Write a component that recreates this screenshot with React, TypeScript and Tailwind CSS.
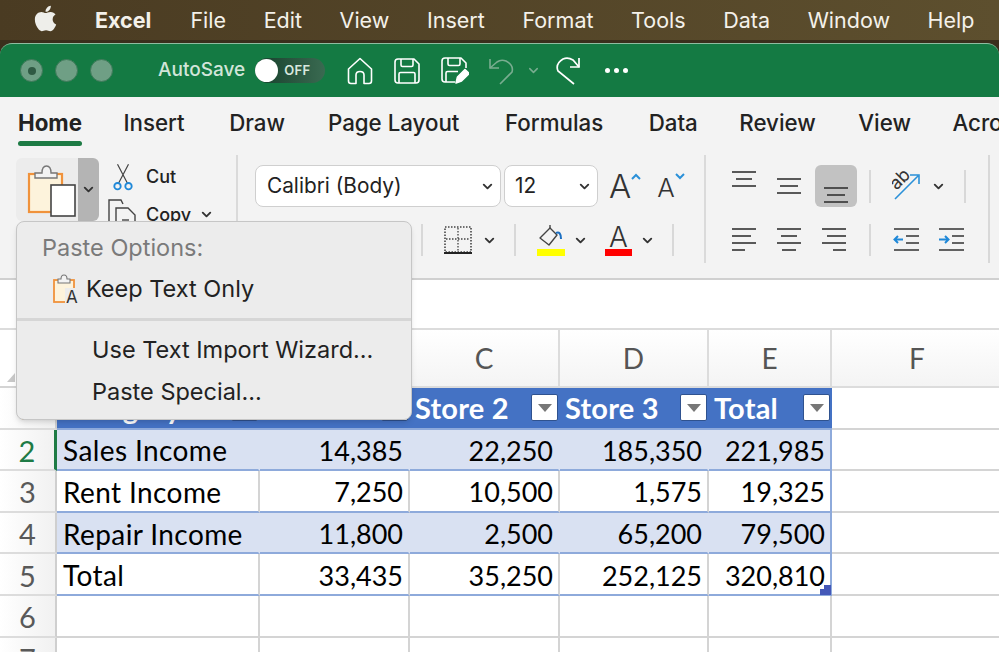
import { ChevronDown } from "lucide-react";
import { FaApple } from "react-icons/fa";

const menus = ["File", "Edit", "View", "Insert", "Format", "Tools", "Data", "Window", "Help"];
const tabs = [
  { name: "Insert", cls: "ml-[41.5px]" },
  { name: "Draw", cls: "ml-[44.5px]" },
  { name: "Page Layout", cls: "ml-[43px]" },
  { name: "Formulas", cls: "ml-[45.5px]" },
  { name: "Data", cls: "ml-[45.5px]" },
  { name: "Review", cls: "ml-[41.5px]" },
  { name: "View", cls: "ml-[42.5px]" },
  { name: "Acrobat", cls: "ml-[41.5px]" },
];

function Chev({ className = "" }: { className?: string }) {
  return <ChevronDown size={15} strokeWidth={3} className={"text-[#333] " + className} />;
}

function Sep({ className = "" }: { className?: string }) {
  return <div className={"w-[2px] bg-[#d8d8d8] " + className} />;
}

// horizontal text-alignment glyph: each line is [x1, x2, y]
function Lines({ lines }: { lines: number[][] }) {
  return (
    <svg width="26" height="26" viewBox="0 0 26 26" fill="none" stroke="#333" strokeWidth="1.6">
      {lines.map((l, i) => (
        <line key={i} x1={l[0]} x2={l[1]} y1={l[2]} y2={l[2]} />
      ))}
    </svg>
  );
}

function TitleIcons() {
  return (
    <div className="flex items-center ml-[22px]">
      <svg width="26" height="28" viewBox="0 0 26 28" fill="none" stroke="white" strokeWidth="1.6" strokeLinejoin="round">
        <path d="M1.5 12 L13 1.5 L24.5 12 V24 Q24.5 26.5 22 26.5 H17 V18 Q17 14.5 13 14.5 Q9 14.5 9 18 V26.5 H4 Q1.5 26.5 1.5 24 Z" />
      </svg>
      <svg className="ml-[21px]" width="26" height="26" viewBox="0 0 26 26" fill="none" stroke="white" strokeWidth="1.6" strokeLinejoin="round">
        <path d="M1 4 Q1 1 4 1 H20 L25 6 V22 Q25 25 22 25 H4 Q1 25 1 22 Z" />
        <path d="M7 1 V7 Q7 8.5 8.5 8.5 H17.5 Q19 8.5 19 7 V1" />
        <path d="M5 25 V16 Q5 14.5 6.5 14.5 H19.5 Q21 14.5 21 16 V25" />
      </svg>
      <svg className="ml-[21px]" width="28" height="27" viewBox="0 0 28 27" fill="none" stroke="white" strokeWidth="1.6" strokeLinejoin="round">
        <path d="M14 25 H4 Q1 25 1 22 V4 Q1 1 4 1 H20 L25 6 V11" />
        <path d="M7 1 V7 Q7 8.5 8.5 8.5 H17.5 Q19 8.5 19 7 V1" />
        <path d="M5 25 V16 Q5 14.5 6.5 14.5 H17" />
        <path d="M15 26 L16.5 20 L24 12.5 L28 16.5 L20.5 24 Z" fill="white" />
      </svg>
      <svg className="ml-[20px]" width="26" height="28" viewBox="0 0 26 28" fill="none" stroke="#79ad90" strokeWidth="1.6">
        <path d="M1 2 V11 H10" />
        <path d="M1 11 L8 5 Q12 2 17 4 Q25 8 23 15 L11 27" />
      </svg>
      <ChevronDown size={15} strokeWidth={2.4} className="ml-[11px] text-[#79ad90]" />
      <svg className="ml-[15px]" width="25" height="30" viewBox="0 0 25 30" fill="none" stroke="white" strokeWidth="1.7">
        <path d="M23 2 V11 H14" />
        <path d="M23 11 L17 4 Q12 1 7 3 Q-1 8 2 15 L18 28" />
      </svg>
      <div className="ml-[24px] flex gap-[4.5px]">
        <div className="w-[4.5px] h-[4.5px] rounded-full bg-white" />
        <div className="w-[4.5px] h-[4.5px] rounded-full bg-white" />
        <div className="w-[4.5px] h-[4.5px] rounded-full bg-white" />
      </div>
    </div>
  );
}

function Ribbon() {
  return (
    <div className="h-[123px] bg-[#f3f3f3] flex text-[#222]">
      {/* clipboard */}
      <div className="w-[238px] h-[66px] pl-[16px] pt-[3px] flex shrink-0 border-r-2 border-[#dadada]">
        <div className="w-[83px] h-[63px] flex rounded-md overflow-hidden">
          <div className="w-[62px] bg-[#ececec]">
            <svg width="62" height="63" viewBox="0 0 62 63" fill="none">
              <rect x="13" y="16" width="33" height="38" fill="#fdf3dc" stroke="#f0923b" strokeWidth="2.2" />
              <path d="M19 20 V15 H26 Q26 8 30.5 8 Q35 8 35 15 H41 V20 Z" fill="#f3f3f3" stroke="#777" strokeWidth="1.4" />
              <rect x="35" y="27" width="24" height="31" fill="white" stroke="#444" strokeWidth="1.6" />
            </svg>
          </div>
          <div className="flex-1 bg-[#b4b4b4] flex items-center justify-center">
            <Chev />
          </div>
        </div>
        <div className="ml-[13px] flex flex-col">
          <div className="flex items-center h-[37px] shrink-0">
            <svg width="22" height="28" viewBox="0 0 24 30" fill="none">
              <path d="M6 1 L17 22 M18 1 L7 22" stroke="#444" strokeWidth="1.3" />
              <circle cx="6" cy="25" r="3.5" stroke="#1f88d8" strokeWidth="2" />
              <circle cx="18" cy="25" r="3.5" stroke="#1f88d8" strokeWidth="2" />
            </svg>
            <span className="ml-[12px] text-[18px] font-medium">Cut</span>
          </div>
          <div className="flex items-center h-[38px] shrink-0 -ml-[4px]">
            <svg width="28" height="30" viewBox="0 0 28 30" fill="none" stroke="#444" strokeWidth="1.4">
              <path d="M1 24 V1 H13 L15 5" />
              <path d="M8 30 V9 H20 L27 16 V30 Z" fill="#f3f3f3" />
              <path d="M14 21 H21" />
            </svg>
            <span className="ml-[10px] text-[18px] font-medium">Copy</span>
            <Chev className="ml-[8px]" />
          </div>
        </div>
      </div>

      {/* font */}
      <div className="w-[468px] h-[108px] shrink-0 border-r-2 border-[#dadada] pl-[17px] pt-[10px] flex flex-col">
        <div className="flex items-center h-[42px]">
          <div className="w-[246px] h-[42px] bg-white border border-[#cfcfcf] rounded-lg flex items-center justify-between pl-[11px] pr-[5px] text-[20.8px]">
            <span>Calibri (Body)</span>
            <Chev />
          </div>
          <div className="ml-[3px] w-[94px] h-[42px] bg-white border border-[#cfcfcf] rounded-lg flex items-center justify-between pl-[10px] pr-[5px] text-[20.8px]">
            <span>12</span>
            <Chev />
          </div>
          <div className="ml-[11px] flex items-start">
            <span className="text-[33px] font-light leading-none text-[#333]">A</span>
            <svg className="mt-[3px]" width="10" height="7" viewBox="0 0 10 7" fill="none" stroke="#2a90d8" strokeWidth="2"><path d="M1 6 L5 2 L9 6" /></svg>
          </div>
          <div className="ml-[16px] flex items-start">
            <span className="text-[26px] font-light leading-none mt-[3px] text-[#333]">A</span>
            <svg className="mt-[1px]" width="10" height="7" viewBox="0 0 10 7" fill="none" stroke="#2a90d8" strokeWidth="2"><path d="M1 1 L5 5 L9 1" /></svg>
          </div>
        </div>
        <div className="flex items-center h-[36px] mt-[15px]">
          <div className="w-[150px] flex items-center text-[20px] gap-[16px] pl-[2px]">
            <b>B</b>
            <i>I</i>
            <u>U</u>
          </div>
          <Sep className="ml-[16px] h-[32px]" />
          <svg className="ml-[21px]" width="28" height="30" viewBox="0 0 28 30" fill="none">
            <rect x="1" y="2" width="26" height="25" stroke="#444" strokeWidth="1.6" strokeDasharray="1.5 1.5" />
            <path d="M14 3 V26 M2 14 H26" stroke="#444" strokeWidth="1.3" strokeDasharray="1.5 1.5" />
            <path d="M0 28 H28" stroke="#222" strokeWidth="2" />
          </svg>
          <Chev className="ml-[10px]" />
          <Sep className="ml-[17px] h-[32px]" />
          <div className="ml-[21px] flex flex-col items-center w-[28px]">
            <svg width="24" height="24" viewBox="0 0 24 24" fill="none">
              <path d="M1 13 L11 3 L18 10 L10 20 Z" stroke="#444" strokeWidth="1.4" strokeLinejoin="round" />
              <path d="M11 3 V0" stroke="#444" strokeWidth="1.4" />
              <path d="M17 8 Q22 6 22 14" stroke="#1b6fc2" strokeWidth="2" />
            </svg>
            <div className="w-[28px] h-[7px] bg-[#ffff00]" />
          </div>
          <Chev className="ml-[8px]" />
          <div className="ml-[17px] flex flex-col items-center w-[27px]">
            <span className="text-[28px] font-light leading-[24px] text-[#333]">A</span>
            <div className="w-[27px] h-[7px] bg-[#ff0000]" />
          </div>
          <Chev className="ml-[8px]" />
          <Sep className="ml-[17px] h-[32px]" />
        </div>
      </div>

      {/* alignment */}
      <div className="flex-1 pl-[25px] pt-[10px] flex">
        <div className="flex flex-col">
          <div className="flex items-center h-[42px]">
            <div className="w-[26px] flex justify-center -mt-[14px]">
              <Lines lines={[[1, 25, 6], [5, 21, 13], [1, 25, 20]]} />
            </div>
            <div className="ml-[19px] w-[26px]">
              <Lines lines={[[1, 25, 6], [4, 22, 13], [1, 25, 20]]} />
            </div>
            <div className="ml-[13px] w-[42px] h-[42px] rounded-md bg-[#c2c2c2] flex items-end justify-center pb-[1px]">
              <Lines lines={[[1, 25, 8], [4, 22, 15], [1, 25, 22]]} />
            </div>
          </div>
          <div className="flex items-center h-[36px] mt-[15px]">
            <Lines lines={[[1, 25, 2], [1, 20, 9], [1, 25, 16], [1, 14, 23]]} />
            <div className="ml-[19px]"><Lines lines={[[1, 25, 2], [5, 21, 9], [1, 25, 16], [6, 20, 23]]} /></div>
            <div className="ml-[19px]"><Lines lines={[[1, 25, 2], [6, 25, 9], [1, 25, 16], [12, 25, 23]]} /></div>
          </div>
        </div>
        <div className="flex flex-col ml-[12px]">
          <div className="flex items-center h-[42px]">
            <Sep className="h-[33px]" />
            <svg className="ml-[21px]" width="29" height="30" viewBox="0 0 29 30" fill="none">
              <path d="M3 28 L26 5 M18 4 H27 V13" stroke="#2a90d8" strokeWidth="1.6" />
              <text x="0" y="15" fontSize="18" fill="#333" transform="rotate(-45 8 12)">ab</text>
            </svg>
            <Chev className="ml-[10px]" />
            <Sep className="ml-[18px] h-[33px]" />
          </div>
          <div className="flex items-center h-[36px] mt-[15px]">
            <Sep className="h-[32px]" />
            <svg className="ml-[22px]" width="27" height="26" viewBox="0 0 27 26" fill="none" strokeWidth="1.6">
              <path d="M1 2 H26 M13 9 H26 M13 16 H26 M1 23 H26" stroke="#333" />
              <path d="M10 12.5 H2 M5 9 L1.5 12.5 L5 16" stroke="#1f88d8" strokeWidth="2" />
            </svg>
            <svg className="ml-[18px]" width="27" height="26" viewBox="0 0 27 26" fill="none" strokeWidth="1.6">
              <path d="M1 2 H26 M14 9 H26 M14 16 H26 M1 23 H26" stroke="#333" />
              <path d="M1 12.5 H10 M7 9 L10.5 12.5 L7 16" stroke="#1f88d8" strokeWidth="2" />
            </svg>
          </div>
        </div>
        <Sep className="ml-[22px] h-[108px] -mt-[10px]" />
      </div>
    </div>
  );
}

const colCls = "grid grid-cols-[57px_203px_150px_150px_149px_123px_172px]";
const gray = "border-[#d4d4d4]";

function FilterBtn() {
  return (
    <div className="w-[27px] h-[27px] shrink-0 bg-white border border-[#2f528f] rounded-[2px] flex items-center justify-center">
      <div className="w-0 h-0 border-l-[7px] border-r-[7px] border-t-[8px] border-l-transparent border-r-transparent border-t-[#777]" />
    </div>
  );
}

function RowHead({ n, active }: { n: number; active?: boolean }) {
  return (
    <div
      className={
        "flex items-center justify-center pt-[2px] bg-gradient-to-r from-white to-[#f1f1f1] border-b-2 border-[#dcdcdc] text-[29px] " +
        (active ? "text-[#1e7b45] border-r-[3px] border-r-[#1e7b45]" : "text-[#595959] border-r-2 border-r-[#cfcfcf]")
      }
    >
      {n}
    </div>
  );
}

function DataRow({ n, cells, band, active }: { n: number; cells: string[]; band?: boolean; active?: boolean }) {
  return (
    <div className={colCls + " h-[41.6px]"}>
      <RowHead n={n} active={active} />
      {cells.map((c, i) => (
        <div
          key={i}
          className={
            "flex items-center pt-[2px] border-b-2 border-b-[#8eaadb] border-r-2 text-black " +
            (i === 0 ? "justify-start pl-[6px] text-[28px] tracking-[0.4px] " : "justify-end pr-[5px] text-[27px] ") +
            (band ? "bg-[#d9e1f2] " : "bg-white ") +
            (i === 4 ? "border-r-[#8eaadb]" : band ? "border-r-transparent" : "border-r-[#d4d4d4]")
          }
        >
          {c}
        </div>
      ))}
      <div className={"bg-white border-b-2 " + gray} />
    </div>
  );
}

function EmptyRow({ n }: { n: number }) {
  return (
    <div className={colCls + " h-[41.6px]"}>
      <RowHead n={n} />
      {[0, 1, 2, 3, 4].map((i) => (
        <div key={i} className={"bg-white border-b-2 border-r-2 " + gray} />
      ))}
      <div className={"bg-white border-b-2 " + gray} />
    </div>
  );
}

function Sheet() {
  return (
    <div className="[font-family:Lato,sans-serif] leading-none">
      <div className={colCls + " h-[60px] border-t-2 border-[#dcdcdc]"}>
        <div className="bg-white border-r-2 border-b-2 border-[#d4d4d4] flex items-end justify-end pr-[40px] pb-[4px]">
          <div className="w-0 h-0 border-l-[8px] border-t-[9px] border-l-transparent border-t-transparent border-r-[8px] border-r-[#c8c8c8]" />
        </div>
        {["A", "B", "C", "D", "E", "F"].map((c) => (
          <div key={c} className="flex items-center justify-center bg-gradient-to-b from-white to-[#f4f4f4] border-r-2 border-b-2 border-[#dcdcdc] text-[#555] text-[28px]">
            {c}
          </div>
        ))}
      </div>
      <div className={colCls + " h-[41.6px]"}>
        <RowHead n={1} />
        {["Category", "Store 1", "Store 2", "Store 3", "Total"].map((h) => (
          <div key={h} className="flex items-center justify-between bg-[#4472c4] border-b-2 border-b-[#8eaadb] pl-[5px] pr-[2px] text-white font-bold text-[29px] tracking-[0.2px]">
            <span>{h}</span>
            <FilterBtn />
          </div>
        ))}
        <div className={"bg-white border-b-2 " + gray} />
      </div>
      <DataRow n={2} band active cells={["Sales Income", "14,385", "22,250", "185,350", "221,985"]} />
      <DataRow n={3} cells={["Rent Income", "7,250", "10,500", "1,575", "19,325"]} />
      <DataRow n={4} band cells={["Repair Income", "11,800", "2,500", "65,200", "79,500"]} />
      <DataRow n={5} cells={["Total", "33,435", "35,250", "252,125", "320,810"]} />
      <EmptyRow n={6} />
      <EmptyRow n={7} />
    </div>
  );
}

export default function App() {
  return (
    <div className="relative w-[999px] h-[652px] overflow-hidden bg-white [font-family:Inter,sans-serif]">
      {/* menu bar */}
      <div className="h-[40px] bg-gradient-to-r from-[#4a3b22] to-[#5d4f2e] flex items-center pl-[31px] text-[21.5px] text-[#f4f1ea]">
        <FaApple size={29} className="text-[#eeeeea] -mt-[3px]" />
        <span className="ml-[35px] font-bold text-[21.5px]">Excel</span>
        <div className="ml-[39px] flex gap-[37.6px]">
          {menus.map((m) => (
            <span key={m}>{m}</span>
          ))}
        </div>
      </div>
      {/* title bar */}
      <div className="bg-[#2f2616]">
        <div className="h-[57px] pt-[3px] bg-[#3a2f1c]">
          <div className="h-[54px] bg-[#147a43] border-t border-[#8fbda1] rounded-t-[12px] flex items-center pl-[20px]">
            <div className="w-[23px] h-[23px] rounded-full bg-[#6f9f85] border border-[#3f7a5a] flex items-center justify-center">
              <div className="w-[8px] h-[8px] rounded-full bg-[#2f5a43]" />
            </div>
            <div className="ml-[12px] w-[23px] h-[23px] rounded-full bg-[#6f9f85] border border-[#3f7a5a]" />
            <div className="ml-[12px] w-[23px] h-[23px] rounded-full bg-[#6f9f85] border border-[#3f7a5a]" />
            <span className="ml-[45px] text-[19px] font-medium text-[#d2e5d9]">AutoSave</span>
            <div className="ml-[10px] w-[70px] h-[25px] rounded-full bg-gradient-to-r from-[#153f2b] to-[#3a6a51] flex items-center">
              <div className="w-[23px] h-[23px] rounded-full bg-white" />
              <span className="ml-[6px] text-[13px] font-semibold tracking-wide text-[#d8e8de]">OFF</span>
            </div>
            <TitleIcons />
          </div>
        </div>
      </div>
      {/* tabs */}
      <div className="h-[58px] bg-[#f3f3f3] flex items-start pl-[18px] pt-[12px] text-[22.3px] text-[#222] overflow-hidden whitespace-nowrap">
        <div className="flex flex-col items-stretch">
          <span className="font-bold leading-[28px]">Home</span>
          <div className="mt-[4px] h-[5px] rounded-full bg-[#1e7b45]" />
        </div>
        {tabs.map((t) => (
          <span key={t.name} className={t.cls + " font-medium leading-[28px]"}>
            {t.name}
          </span>
        ))}
      </div>
      <Ribbon />
      {/* formula bar */}
      <div className="h-[50px] bg-white border-t-2 border-[#d0d0d0]" />
      <Sheet />
      {/* fill handle */}
      <div className="absolute left-[820px] top-[585px] w-[11px] h-[10px] bg-[#4458b8]" />
      <div className="absolute left-[820px] top-[585px] w-[4px] h-[4px] bg-white" />
      {/* paste menu */}
      <div className="absolute left-[16px] top-[221px] w-[396px] h-[199px] bg-[#ececec] border border-[#c6c6c6] rounded-lg shadow-md flex flex-col text-[#222] text-[23.5px]">
        <div className="pl-[25px] pt-[10px] h-[45px] text-[23.5px] leading-[32px] text-[#7a7a7a]">Paste Options:</div>
        <div className="flex items-center pl-[36px] h-[43px]">
          <svg width="28" height="30" viewBox="0 0 28 30" fill="none">
            <rect x="1" y="6" width="20" height="22" fill="#fdf3dc" stroke="#f0923b" strokeWidth="1.8" />
            <path d="M5 9 V5 H8 Q8 1 11 1 Q14 1 14 5 H17 V9 Z" fill="#f3f3f3" stroke="#777" strokeWidth="1.1" />
            <rect x="12" y="14" width="16" height="16" fill="#ececec" />
            <text x="13" y="29" fontSize="17" fill="#333" fontFamily="Inter, sans-serif">A</text>
          </svg>
          <span className="ml-[5px]">Keep Text Only</span>
        </div>
        <div className="mt-[8px] h-[3px] bg-[#d6d6d6]" />
        <div className="pl-[75px] mt-[8px] h-[42px] flex items-center">Use Text Import Wizard...</div>
        <div className="pl-[75px] h-[42px] flex items-center">Paste Special...</div>
      </div>
    </div>
  );
}
